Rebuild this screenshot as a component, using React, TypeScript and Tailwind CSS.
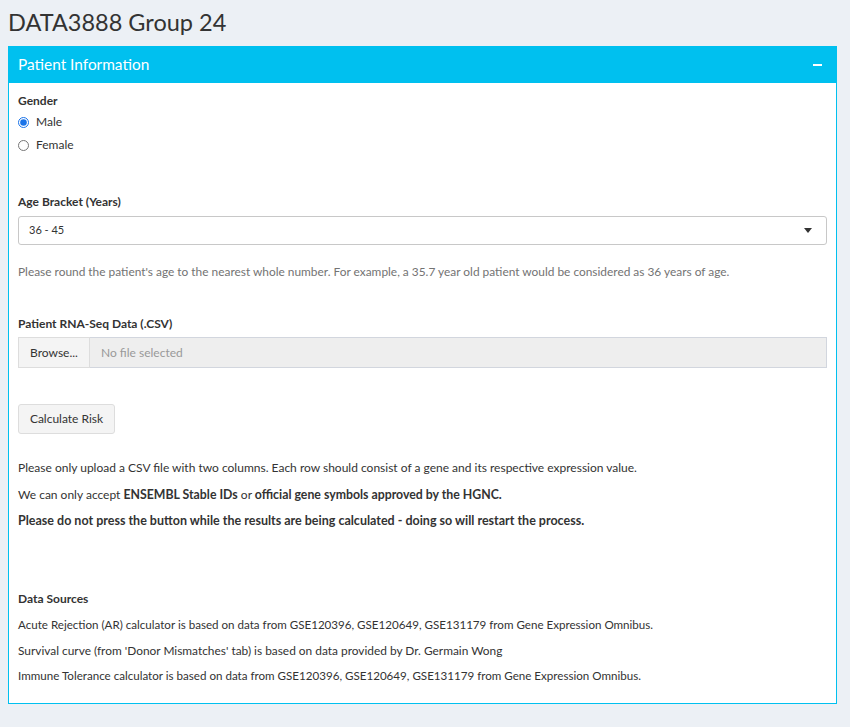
import { useState } from 'react'

export default function App() {
  const [gender, setGender] = useState('male')

  return (
    <div
      className="min-h-[727px] bg-[#ecf0f5] px-2 pb-6 text-[#333]"
      style={{ fontFamily: 'Lato, "Open Sans", sans-serif' }}
    >
      {/* Title */}
      <h1 className="pt-[6px] text-[23.5px] leading-[32px] font-normal text-[#333]">DATA3888 Group 24</h1>

      {/* Box */}
      <div className="mt-[8px] w-[829px] border border-[#00c0ef] bg-white">
        <div className="flex h-[36px] items-center justify-between bg-[#00c0ef] pl-[9px] pr-[14px] text-white">
          <span className="text-[15.4px]">Patient Information</span>
          <span className="block h-[2px] w-[9px] bg-white" />
        </div>

        <div className="px-[9px] pt-[10px] pb-[19px] text-[12px]">
          {/* Gender */}
          <div className="h-[16px] leading-[16px] font-bold">Gender</div>
          <label className="mt-[5px] flex h-[16px] items-center gap-[7px] leading-[16px]">
            <input
              type="radio"
              name="gender"
              checked={gender === 'male'}
              onChange={() => setGender('male')}
              className="h-[11px] w-[11px] accent-[#1a73e8]"
            />
            Male
          </label>
          <label className="mt-[7px] flex h-[16px] items-center gap-[7px] leading-[16px]">
            <input
              type="radio"
              name="gender"
              checked={gender === 'female'}
              onChange={() => setGender('female')}
              className="h-[11px] w-[11px] accent-[#1a73e8]"
            />
            Female
          </label>

          {/* Age */}
          <div className="mt-[41px] h-[16px] leading-[16px] font-bold">Age Bracket (Years)</div>
          <div className="mt-[6px] flex h-[29px] items-center justify-between rounded-[3px] border border-[#c8c8c8] pl-[10px] pr-[14px]">
            <span className="text-[11px]">36 - 45</span>
            <span className="h-0 w-0 border-x-[4.5px] border-t-[5px] border-x-transparent border-t-[#333]" />
          </div>
          <div className="mt-[19px] h-[16px] leading-[16px] text-[#737373] text-[11.9px]">
            Please round the patient's age to the nearest whole number. For example, a 35.7 year old patient would be considered as 36 years of age.
          </div>

          {/* Upload */}
          <div className="mt-[36px] h-[16px] leading-[16px] font-bold">Patient RNA-Seq Data (.CSV)</div>
          <div className="mt-[5px] flex h-[31px]">
            <div className="flex w-[72px] items-center justify-center border border-[#ddd] bg-[#f4f4f4]">Browse...</div>
            <div className="flex flex-1 items-center border border-l-0 border-[#d2d6de] bg-[#eee] pl-[11px] text-[#999]">
              No file selected
            </div>
          </div>

          <div className="mt-[36px] flex h-[30px] w-[97px] items-center justify-center rounded-[3px] border border-[#ddd] bg-[#f4f4f4]">
            Calculate Risk
          </div>

          {/* Notes */}
          <p className="mt-[26px] h-[16px] leading-[16px]">
            Please only upload a CSV file with two columns. Each row should consist of a gene and its respective expression value.
          </p>
          <p className="mt-[11px] h-[16px] leading-[16px]">
            We can only accept <b className="text-[12.3px]">ENSEMBL Stable IDs</b> or{' '}
            <b className="text-[12.3px]">official gene symbols approved by the HGNC.</b>
          </p>
          <p className="mt-[10px] h-[16px] leading-[16px] text-[12.5px] font-bold">
            Please do not press the button while the results are being calculated - doing so will restart the process.
          </p>

          {/* Sources */}
          <div className="mt-[62px] h-[16px] leading-[16px] font-bold">Data Sources</div>
          <p className="mt-[10px] h-[16px] leading-[16px] text-[11.6px]">
            Acute Rejection (AR) calculator is based on data from GSE120396, GSE120649, GSE131179 from Gene Expression Omnibus.
          </p>
          <p className="mt-[10px] h-[16px] leading-[16px] text-[11.9px]">
            Survival curve (from 'Donor Mismatches' tab) is based on data provided by Dr. Germain Wong
          </p>
          <p className="mt-[9px] h-[16px] leading-[16px] text-[11.6px]">
            Immune Tolerance calculator is based on data from GSE120396, GSE120649, GSE131179 from Gene Expression Omnibus.
          </p>
        </div>
      </div>
    </div>
  )
}
